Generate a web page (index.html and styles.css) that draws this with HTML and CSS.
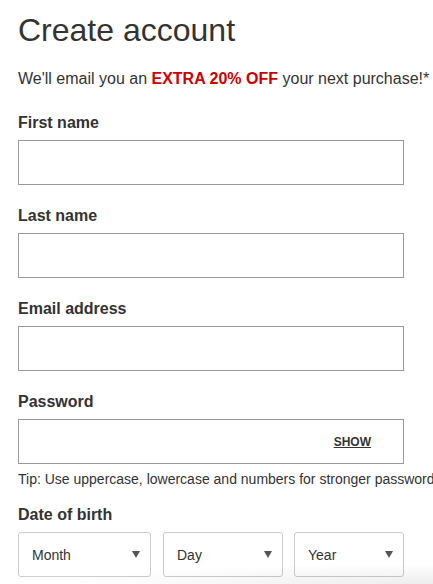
FILE: index.html
```html
<!DOCTYPE html>
<html lang="en">
<head>
    <meta charset="UTF-8">
    <meta name="viewport" content="width=device-width, initial-scale=1.0">
    <title>Create account</title>
    <link rel="stylesheet" href="styles.css">
</head>
<body>
    <div class="page">
        <h1>Create account</h1>
        <p class="promo">We'll email you an <strong>EXTRA 20% OFF</strong> your next purchase!*</p>

        <div class="field">
            <label for="first">First name</label>
            <input type="text" id="first">
        </div>
        <div class="field">
            <label for="last">Last name</label>
            <input type="text" id="last">
        </div>
        <div class="field">
            <label for="email">Email address</label>
            <input type="email" id="email">
        </div>
        <div class="field">
            <label for="password">Password</label>
            <div class="password-box">
                <input type="password" id="password">
                <a href="#" class="show-btn">SHOW</a>
            </div>
            <p class="tip">Tip: Use uppercase, lowercase and numbers for stronger passwords.</p>
        </div>
        <div class="field dob">
            <label>Date of birth</label>
            <div class="dob-row">
                <div class="select month">Month <span class="arrow"></span></div>
                <div class="select day">Day <span class="arrow"></span></div>
                <div class="select year">Year <span class="arrow"></span></div>
            </div>
        </div>
    </div>
    <div class="bottom-fade"></div>
</body>
</html>
```

FILE: styles.css
```css
body {
    margin: 0;
    font-family: "Liberation Sans", Arial, sans-serif;
    color: #333;
    background: #fff;
    overflow: hidden;
}

.page {
    padding: 12px 0 0 18px;
    width: 386px;
}

h1 {
    font-size: 32px;
    font-weight: normal;
    margin: 0;
    line-height: 36px;
}

.promo {
    font-size: 16px;
    margin: 22px 0 0;
    line-height: 18px;
    white-space: nowrap;
}

.promo strong {
    color: #cc0000;
}

.field {
    margin-top: 26px;
}

.field + .field {
    margin-top: 22px;
}

.field label {
    display: block;
    font-size: 16px;
    font-weight: bold;
    line-height: 18px;
    margin-bottom: 8px;
}

input[type="text"],
input[type="email"],
input[type="password"] {
    display: block;
    box-sizing: border-box;
    width: 386px;
    height: 45px;
    border: 1px solid #999;
    border-radius: 0;
    margin: 0;
    padding: 0 12px;
    font-size: 15px;
}

.password-box {
    position: relative;
}

.show-btn {
    position: absolute;
    right: 33px;
    top: 0;
    height: 45px;
    display: flex;
    align-items: center;
    font-size: 12px;
    font-weight: bold;
    color: #333;
    text-decoration: underline;
}

.tip {
    font-size: 14px;
    line-height: 16px;
    margin: 7px 0 0;
    white-space: nowrap;
}

.field.dob {
    margin-top: 19px;
}

.dob-row {
    display: flex;
    gap: 12px;
}

.select {
    box-sizing: border-box;
    height: 45px;
    border: 1px solid #ccc;
    border-radius: 3px;
    display: flex;
    align-items: center;
    justify-content: space-between;
    padding: 0 10px 0 13px;
    font-size: 14px;
}

.select.month { width: 133px; }
.select.day { width: 120px; }
.select.year { width: 110px; margin-left: -1px; }

.arrow {
    width: 0;
    height: 0;
    border-left: 4px solid transparent;
    border-right: 4px solid transparent;
    border-top: 7px solid #555;
}

.bottom-fade {
    position: fixed;
    left: 0;
    right: 0;
    bottom: 0;
    height: 20px;
    background: radial-gradient(ellipse 85% 100% at 100% 100%, rgba(0,0,0,0.07), rgba(0,0,0,0) 100%);
    pointer-events: none;
}
```
